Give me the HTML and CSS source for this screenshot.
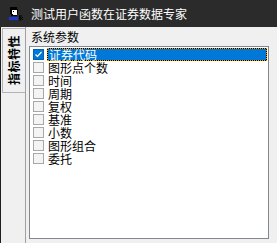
FILE: index.html
```html
<!DOCTYPE html>
<html lang="zh">
<head>
    <meta charset="UTF-8" />
    <title>测试用户函数在证券数据专家</title>
    <link rel="stylesheet" href="styles.css">
</head>
<body>
    <div class="titlebar">
        <svg class="appicon" width="16" height="16" viewBox="0 0 16 16">
            <path d="M2 1h7v2h1v5h-1v2h-6v-2h-1z" fill="#000"/>
            <path d="M4 4h5v5h-4v-1h-1z" fill="#fff"/>
            <rect x="5" y="5" width="1" height="1" fill="#000"/>
            <path d="M1 11h9v3h-9z" fill="#1a3ad8"/>
            <path d="M11 10h3M12 10v5M11 12h2M12 14l3-3M12 11l3 3" stroke="#000" stroke-width="1" fill="none"/>
        </svg>
        <span class="title">测试用户函数在证券数据专家</span>
    </div>

    <div class="main">
        <div class="tabs">
            <div class="tab active"><span>指标特性</span></div>
        </div>
        <div class="panel">
            <div class="group-label">系统参数</div>
            <div class="listbox">
                <div class="item selected">
                    <span class="check checked">
                        <svg width="9" height="9" viewBox="0 0 9 9"><path d="M1.5 4.5l2 2 4-4.5" stroke="#fff" stroke-width="1.2" fill="none"/></svg>
                    </span>
                    <span class="text">证券代码</span>
                </div>
                <div class="item"><span class="check"></span><span class="text">图形点个数</span></div>
                <div class="item"><span class="check"></span><span class="text">时间</span></div>
                <div class="item"><span class="check"></span><span class="text">周期</span></div>
                <div class="item"><span class="check"></span><span class="text">复权</span></div>
                <div class="item"><span class="check"></span><span class="text">基准</span></div>
                <div class="item"><span class="check"></span><span class="text">小数</span></div>
                <div class="item"><span class="check"></span><span class="text">图形组合</span></div>
                <div class="item"><span class="check"></span><span class="text">委托</span></div>
            </div>
        </div>
    </div>
</body>
</html>
```

FILE: styles.css
```css
html, body {
    margin: 0;
    padding: 0;
}

body {
    width: 277px;
    height: 243px;
    overflow: hidden;
    background: #f0f0f0;
    font-family: "Noto Sans CJK SC", "Noto Sans", sans-serif;
    font-size: 12px;
    color: #000;
    display: flex;
    flex-direction: column;
}

.titlebar {
    height: 27px;
    background: #2b2b2b;
    display: flex;
    align-items: center;
    flex-shrink: 0;
}

.appicon {
    margin-left: 8px;
    margin-top: 1px;
}

.title {
    color: #fff;
    margin-left: 7px;
    line-height: 14px;
}

.main {
    flex: 1;
    display: flex;
    border-left: 1px solid #1e1e1e;
}

.tabs {
    width: 24px;
    padding-top: 1px;
}

.tab {
    margin-left: 1px;
    width: 22px;
    height: 63px;
    background: #f0f0f0;
    border: 1px solid #b4b4b4;
    border-right: none;
    display: flex;
    align-items: center;
    justify-content: center;
}

.tab span {
    writing-mode: vertical-rl;
    text-orientation: sideways;
    transform: rotate(180deg);
    white-space: nowrap;
    font-weight: bold;
    font-size: 12px;
    line-height: 14px;
    letter-spacing: 0.5px;
}

.panel {
    flex: 1;
    border-left: 1px solid #a0a0a0;
    display: flex;
    flex-direction: column;
}

.group-label {
    margin: 3px 0 0 5px;
    line-height: 14px;
    height: 16px;
}

.listbox {
    margin-left: 3px;
    width: 238px;
    height: 190px;
    background: #fff;
    border: 1px solid #828790;
    padding-top: 1px;
}

.item {
    display: flex;
    align-items: center;
    height: 13px;
}

.check {
    width: 9px;
    height: 9px;
    margin-left: 3px;
    border: 1px solid #a8a8a8;
    background: #f4f4f4;
    display: flex;
    align-items: center;
    justify-content: center;
}

.check.checked {
    background: #0078d7;
    border-color: #0063b1;
}

.text {
    margin-left: 3px;
    padding-left: 1px;
    line-height: 13px;
    height: 13px;
    white-space: nowrap;
}

.item.selected .text {
    flex: 1;
    margin-right: 1px;
    height: 11px;
    line-height: 11px;
    background: #0078d7;
    color: #fff;
    border: 1px solid #000;
    outline: 1px dotted #ff9a00;
    outline-offset: -1px;
}
```
